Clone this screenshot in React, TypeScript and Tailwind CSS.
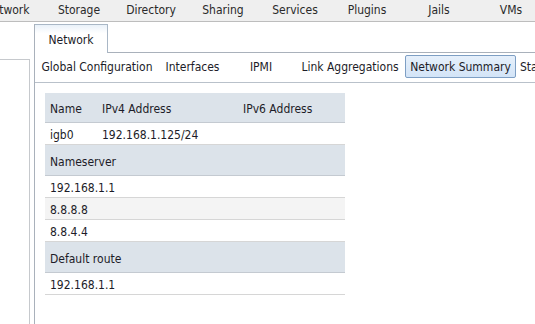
import React from "react";

const navItems = ["Network", "Storage", "Directory", "Sharing", "Services", "Plugins", "Jails", "VMs"];

function SectionHeader({ children, h }: { children: React.ReactNode; h: string }) {
  return (
    <div className={`flex items-center pl-[5px] pt-[3px] bg-[#dce3ea] border-b border-[#c4cad1] ${h}`}>
      {children}
    </div>
  );
}

function Row({ children, alt }: { children: React.ReactNode; alt?: boolean }) {
  return (
    <div className={`flex items-center h-[22px] pl-[5px] pt-[2px] border-b border-[#d6d6d6] ${alt ? "bg-[#f4f4f4]" : "bg-white"}`}>
      {children}
    </div>
  );
}

export default function App() {
  return (
    <div
      className="w-[535px] h-[324px] overflow-hidden bg-white text-[12px] text-[#1c1c28] flex flex-col"
      style={{ fontFamily: '"DejaVu Sans Condensed", "DejaVu Sans", sans-serif' }}
    >
      {/* top nav */}
      <div className="h-[22px] shrink-0 bg-[#efefef] border-b border-[#bdbdbd] flex overflow-hidden">
        <div className="flex ml-[-29px]">
          {navItems.map((n) => (
            <div key={n} className="w-[72px] shrink-0 text-center leading-[20px] text-[#2a2a2a] whitespace-nowrap">
              {n}
            </div>
          ))}
        </div>
      </div>

      <div className="flex flex-1 min-h-0">
        {/* left panel */}
        <div className="w-[30px] shrink-0 mt-[37px] border-t border-r border-[#c6c9cd]" />

        {/* main panel */}
        <div className="ml-[4px] mt-[2px] flex-1 flex flex-col border-l border-[#a9b1bb] min-w-0">
          {/* tab row */}
          <div className="flex h-[29px] shrink-0">
            <div className="w-[73px] h-[29px] border-t border-r border-[#a9b7c6] bg-gradient-to-b from-[#e9f1f9] to-white to-[30%] flex items-center justify-center pt-[2px]">
              Network
            </div>
            <div className="flex-1 border-b border-[#a9b1bb]" />
          </div>

          {/* sub tabs */}
          <div className="h-[30px] shrink-0 border-b border-[#b9c1ca] flex items-start pt-[2px] pl-[1px] whitespace-nowrap">
            <div className="w-[122px] h-[23px] flex items-center justify-center shrink-0">Global Configuration</div>
            <div className="w-[65px] h-[23px] ml-[2px] flex items-center justify-center shrink-0">Interfaces</div>
            <div className="w-[68px] h-[23px] ml-[2px] flex items-center justify-center shrink-0">IPMI</div>
            <div className="w-[106px] h-[23px] ml-[2px] flex items-center justify-center shrink-0">Link Aggregations</div>
            <div className="w-[111px] h-[23px] ml-[2px] flex items-center justify-center shrink-0 rounded-[2px] border border-[#7e9fc4] bg-gradient-to-b from-[#e6f0fb] to-[#d3e4f7]">
              Network Summary
            </div>
            <div className="h-[23px] ml-[4px] flex items-center shrink-0">Static Routes</div>
          </div>

          {/* table */}
          <div className="ml-[10px] mt-[10px] w-[300px]">
            <SectionHeader h="h-[30px]">
              <div className="w-[52px]">Name</div>
              <div className="w-[141px]">IPv4 Address</div>
              <div>IPv6 Address</div>
            </SectionHeader>
            <Row>
              <div className="w-[52px]">igb0</div>
              <div className="w-[141px]">192.168.1.125/24</div>
            </Row>
            <SectionHeader h="h-[31px]">Nameserver</SectionHeader>
            <Row>192.168.1.1</Row>
            <Row alt>8.8.8.8</Row>
            <Row>8.8.4.4</Row>
            <SectionHeader h="h-[31px]">Default route</SectionHeader>
            <Row>192.168.1.1</Row>
          </div>
        </div>
      </div>
    </div>
  );
}
